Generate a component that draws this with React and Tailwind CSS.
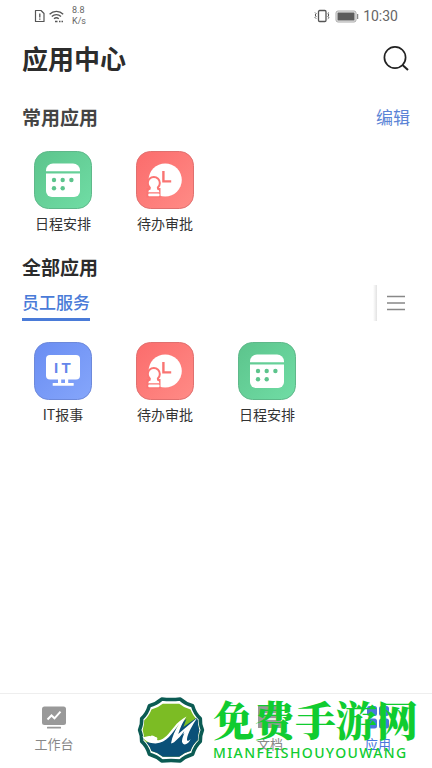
import React, { useState } from "react";

const commonApps = [
  { id: "schedule", name: "日程安排" },
  { id: "approval", name: "待办审批" },
];

const staffApps = [
  { id: "it", name: "IT报事" },
  { id: "approval", name: "待办审批" },
  { id: "schedule", name: "日程安排" },
];

const tabs = [
  { id: "work", name: "工作台" },
  { id: "support", name: "支持" },
  { id: "docs", name: "文档" },
  { id: "apps", name: "应用" },
];

const ScheduleIcon = () => (
  <svg viewBox="0 0 58 58" className="w-[58px] h-[58px]" aria-hidden="true">
    <defs>
      <linearGradient id="green" x1="0" y1="0" x2="1" y2="1">
        <stop offset="0" stopColor="#5cc48c" />
        <stop offset="1" stopColor="#70dda5" />
      </linearGradient>
    </defs>
    <rect x="0.5" y="0.5" width="57" height="57" rx="14" fill="url(#green)" stroke="#5fb88a" />
    <path d="M12 20.3v-.8a7 7 0 0 1 7-7h20a7 7 0 0 1 7 7v.8z" fill="#fff" />
    <path d="M12 22.6h34V40a6 6 0 0 1-6 6H18a6 6 0 0 1-6-6z" fill="#fff" />
    <g fill="#5cc48c">
      <circle cx="20" cy="29" r="2.2" />
      <circle cx="28.7" cy="29" r="2.2" />
      <circle cx="37.4" cy="29" r="2.2" />
      <circle cx="20" cy="37.2" r="2.2" />
      <circle cx="28.7" cy="37.2" r="2.2" />
    </g>
  </svg>
);

const ApprovalIcon = () => (
  <svg viewBox="0 0 58 58" className="w-[58px] h-[58px]" aria-hidden="true">
    <defs>
      <linearGradient id="red" x1="0" y1="0" x2="1" y2="1">
        <stop offset="0" stopColor="#fb6c6c" />
        <stop offset="1" stopColor="#ff8b86" />
      </linearGradient>
    </defs>
    <rect x="0.5" y="0.5" width="57" height="57" rx="14" fill="url(#red)" stroke="#e0706f" />
    <circle cx="29.2" cy="29" r="16.6" fill="#fff" />
    <path d="M27.4 20v10.4h7.8" fill="none" stroke="#f97472" strokeWidth="2.4" />
    <circle cx="17.8" cy="32" r="7" fill="#fb7472" />
    <path d="M10.5 37h14v9.5h-14z" fill="#fb7472" />
    <circle cx="17.8" cy="32" r="5" fill="#fff" />
    <path d="M15 34h5.6l.5 4.5q2.300.3 2.300 2.800H12.300q0-2.500 2.300-2.800z" fill="#fff" />
    <rect x="12.3" y="42.6" width="11.2" height="2.7" rx="0.8" fill="#fff" />
  </svg>
);

const ItIcon = () => (
  <svg viewBox="0 0 58 58" className="w-[58px] h-[58px]" aria-hidden="true">
    <defs>
      <linearGradient id="blue" x1="0" y1="0" x2="1" y2="1">
        <stop offset="0" stopColor="#6a8df2" />
        <stop offset="1" stopColor="#85a6fb" />
      </linearGradient>
    </defs>
    <rect x="0.5" y="0.5" width="57" height="57" rx="14" fill="url(#blue)" stroke="#6d89da" />
    <rect x="12" y="13" width="34" height="24.5" rx="4" fill="#fff" />
    <path d="M24 37h3.200v5h-3.200zM31 37h3.200v5h-3.200z" fill="#fff" />
    <rect x="18.7" y="41" width="21" height="2.8" rx="0.6" fill="#fff" />
    <text y="31" fill="#6486ea" fontFamily="Liberation Sans, sans-serif" fontWeight="700" fontSize="15">
      <tspan x="20">I</tspan>
      <tspan x="27.5">T</tspan>
    </text>
  </svg>
);

const icons = { schedule: ScheduleIcon, approval: ApprovalIcon, it: ItIcon };

const TabIcon = ({ id }) => {
  if (id === "work") {
    return (
      <svg viewBox="0 0 24 24" className="w-6 h-6" aria-hidden="true">
        <rect y="0.5" width="24" height="18.5" rx="2.5" fill="#999" />
        <rect x="5" y="20.8" width="14" height="1.8" rx="0.5" fill="#999" />
        <path d="M5.500 13.500 9.500 9.500l3 2.800 6-6.600" fill="none" stroke="#fff" strokeWidth="2" />
      </svg>
    );
  }
  if (id === "apps") {
    return (
      <svg viewBox="0 0 24 24" className="w-6 h-6" fill="#4a76dc" aria-hidden="true">
        <rect x="1" width="10" height="10" rx="2.5" />
        <rect x="13" width="10" height="10" rx="2.5" />
        <rect x="1" y="12.5" width="10" height="10" rx="2.5" />
        <rect x="13" y="12.5" width="10" height="10" rx="2.5" />
      </svg>
    );
  }
  if (id === "docs") {
    return (
      <svg viewBox="0 0 24 24" className="w-6 h-6" aria-hidden="true">
        <path d="M0 0h18l5 5v17H0z" fill="#999" />
        <path d="M6 8h12M6 13h12" stroke="#fff" strokeWidth="1.5" />
      </svg>
    );
  }
  return (
    <svg viewBox="0 0 24 24" className="w-6 h-6" aria-hidden="true">
      <circle cx="12" cy="11" r="10" fill="#999" />
    </svg>
  );
};

const StatusBar = () => (
  <div className="flex items-center justify-between h-8 px-[34px] text-[#666] font-[Roboto,sans-serif]">
    <div className="flex items-center gap-1">
      <svg viewBox="0 0 11 14" className="w-[11px] h-[14px]" fill="none" stroke="#555" aria-hidden="true">
        <path d="M1.500 1.500H7L10 4.500v8H1.500z" strokeWidth="1.2" strokeLinejoin="round" />
        <path d="M5.800 4.500v4M5.800 9.600v1.200" strokeWidth="1.3" />
      </svg>
      <svg viewBox="0 0 15 13" className="w-[15px] h-[13px]" fill="none" stroke="#555" strokeWidth="1.3" aria-hidden="true">
        <path d="M.6 4.200a9.600 9.600 0 0 1 13.600 0M2.800 6.500a6.600 6.600 0 0 1 9.200 0M5 8.800a3.600 3.600 0 0 1 4.800 0" />
        <path d="M6 11.500h2.500M10 11.500h1.500M12.500 11.500H14" />
      </svg>
      <div className="text-[9px] leading-[11px] ml-1">
        <div>8.8</div>
        <div>K/s</div>
      </div>
    </div>
    <div className="flex items-center gap-1">
      <svg viewBox="0 0 17 14" className="w-[17px] h-[14px]" fill="none" stroke="#555" aria-hidden="true">
        <rect x="4.5" y="1.5" width="7.5" height="11" rx="1.2" strokeWidth="1.3" />
        <path d="M1 3.500l1.200 1.200L1 6l1.200 1.200L1 8.500l1.200 1.200M15 3.500l-1.200 1.200L15 6l-1.200 1.200L15 8.500l-1.200 1.200" />
      </svg>
      <svg viewBox="0 0 24 13" className="w-6 h-[13px]" aria-hidden="true">
        <rect x="1" y="1" width="20" height="11" rx="2" fill="#eee" stroke="#aaa" />
        <rect x="2.5" y="2.5" width="17" height="8" rx="0.5" fill="#5c5c5c" />
        <path d="M22.600 4v5" stroke="#888" strokeWidth="1.3" />
      </svg>
      <span className="text-[14px] leading-4">10:30</span>
    </div>
  </div>
);

const AppGrid = ({ apps }) => (
  <div className="grid grid-cols-4 px-3">
    {apps.map((app) => {
      const Icon = icons[app.id];
      return (
        <button key={app.id} type="button" className="flex flex-col items-center gap-[2px] cursor-pointer">
          <Icon />
          <span className="text-[14px] leading-6 text-[#333]">{app.name}</span>
        </button>
      );
    })}
  </div>
);

const Watermark = () => (
  <div className="absolute right-[14px] top-0 flex items-start gap-2 pointer-events-none">
    <svg viewBox="0 0 66 66" className="w-[68px] h-[68px] mt-[2px]" aria-hidden="true">
      <path
        d="M24 3Q33 4 42 3 47 7.500 54 9.500 56 17 61.500 22 61 27 63.500 33 61 39 61.500 44 56 49 54 56.500 47 58.500 42 63 33 62 24 63 19 58.500 12 56.500 10 49 4.500 44 5 39 2.500 33 5 27 4.500 22 10 17 12 9.500 19 7.500 24 3z"
        fill="#fff"
        stroke="#0b5b53"
        strokeWidth="3.4"
        strokeLinejoin="round"
      />
      <path d="M25 7.500H41q4.500 4 11 5.500 2 6 7 10.500 0 5 1.500 9.500-1.500 5-1.500 10-5 4-7 10.500-6.500 1.500-11 5.500H25q-4.500-4-11-5.500-2-6.500-7-10.500 0-5-1.500-10Q7 28 7 23.500 12 19 14 13q6.500-1.500 11-5.500z" fill="#7cbc24" />
      <path d="M9 45c14 1 20-4 27-12l12-11-3 8 13-9 1 2.500q0 5 1.500 9.500-1.500 5-1.500 10-5 4-7 10.500-6.500 1.500-11 5.500H25q-4.500-4-11-5.500-1.500-4.500-5-8.500z" fill="#0a5078" />
      <path d="M5 39c3 2 5-1 8 0 2-2 4 1 6 1 2 1-1 3 2 3 6-1 10-7 15-13 3-4 8-8 12-10-4 6-6 11-8 17L58.500 21C54 28 49 36 48.500 42c0 2 1 2 3.500 0-2 4-4 5-6 5-4-1-2-6 0-11L36 46h-3c1-6 4-13 8-19C34 36 29 46 18 46 12 46 8 44 5 39z" fill="#fff" />
      <path d="M36 45q6-5 10-11-4 8-2 12-5 4-14 2z" fill="#0a5078" />
    </svg>
    <div className="text-[#10cc30]">
      <div className="text-[41px] leading-[50px] font-black font-['Noto_Serif_CJK_SC','Noto_Sans_CJK_SC',serif]">免费手游网</div>
      <div className="text-[14px] leading-[18px] font-medium tracking-widest font-['Noto_Sans',sans-serif]">MIANFEISHOUYOUWANG</div>
    </div>
  </div>
);

const App = () => {
  const [active, setActive] = useState("apps");

  return (
    <div className="min-h-screen flex flex-col bg-white font-['Noto_Sans_CJK_SC',sans-serif]">
      <StatusBar />

      <header className="flex items-center justify-between px-[22px] h-[52px]">
        <h1 className="text-[26px] leading-8 font-bold text-[#2c2c2c]">应用中心</h1>
        <button type="button" aria-label="搜索" className="cursor-pointer">
          <svg viewBox="0 0 28 28" className="w-7 h-7" fill="none" stroke="#222" aria-hidden="true">
            <circle cx="13" cy="13.5" r="10.6" strokeWidth="1.7" />
            <path d="M20.500 21 26 26" strokeWidth="2" />
          </svg>
        </button>
      </header>

      <main className="flex-1">
        <section className="pt-[19px]">
          <div className="flex items-center justify-between px-[22px] mb-5">
            <h2 className="text-[19px] leading-7 font-bold text-[#444]">常用应用</h2>
            <button type="button" className="text-[17px] leading-6 text-[#5b84d6] cursor-pointer">编辑</button>
          </div>
          <AppGrid apps={commonApps} />
        </section>

        <section className="pt-[18px]">
          <h2 className="text-[19px] leading-7 font-bold text-[#2c2c2c] px-[22px]">全部应用</h2>
          <div className="flex items-end justify-between pl-[22px] mb-[21px] mt-1">
            <button type="button" className="text-[17px] leading-8 font-medium text-[#4a7bd8] border-b-3 border-[#4a7bd8] cursor-pointer">
              员工服务
            </button>
            <div className="flex items-center h-9">
              <span className="w-1 h-9 bg-linear-to-r from-white to-[#e2e2e2]" />
              <button type="button" aria-label="全部分类" className="pl-[10px] pr-[27px] cursor-pointer">
                <svg viewBox="0 0 18 16" className="w-[18px] h-4" stroke="#888" strokeWidth="1.5" aria-hidden="true">
                  <path d="M0 1.500h18M0 8h18M0 14.500h18" />
                </svg>
              </button>
            </div>
          </div>
          <AppGrid apps={staffApps} />
        </section>
      </main>

      <nav className="relative grid grid-cols-4 h-[75px] border-t border-[#eee] bg-white">
        {tabs.map((tab) => (
          <button
            key={tab.id}
            type="button"
            onClick={() => setActive(tab.id)}
            className={`flex flex-col items-center gap-1 pt-3 cursor-pointer ${active === tab.id ? "text-[#4a76dc]" : "text-[#888]"}`}
          >
            <TabIcon id={tab.id} />
            <span className="text-[13px] leading-5">{tab.name}</span>
          </button>
        ))}
        <Watermark />
      </nav>
    </div>
  );
};

export default App;
